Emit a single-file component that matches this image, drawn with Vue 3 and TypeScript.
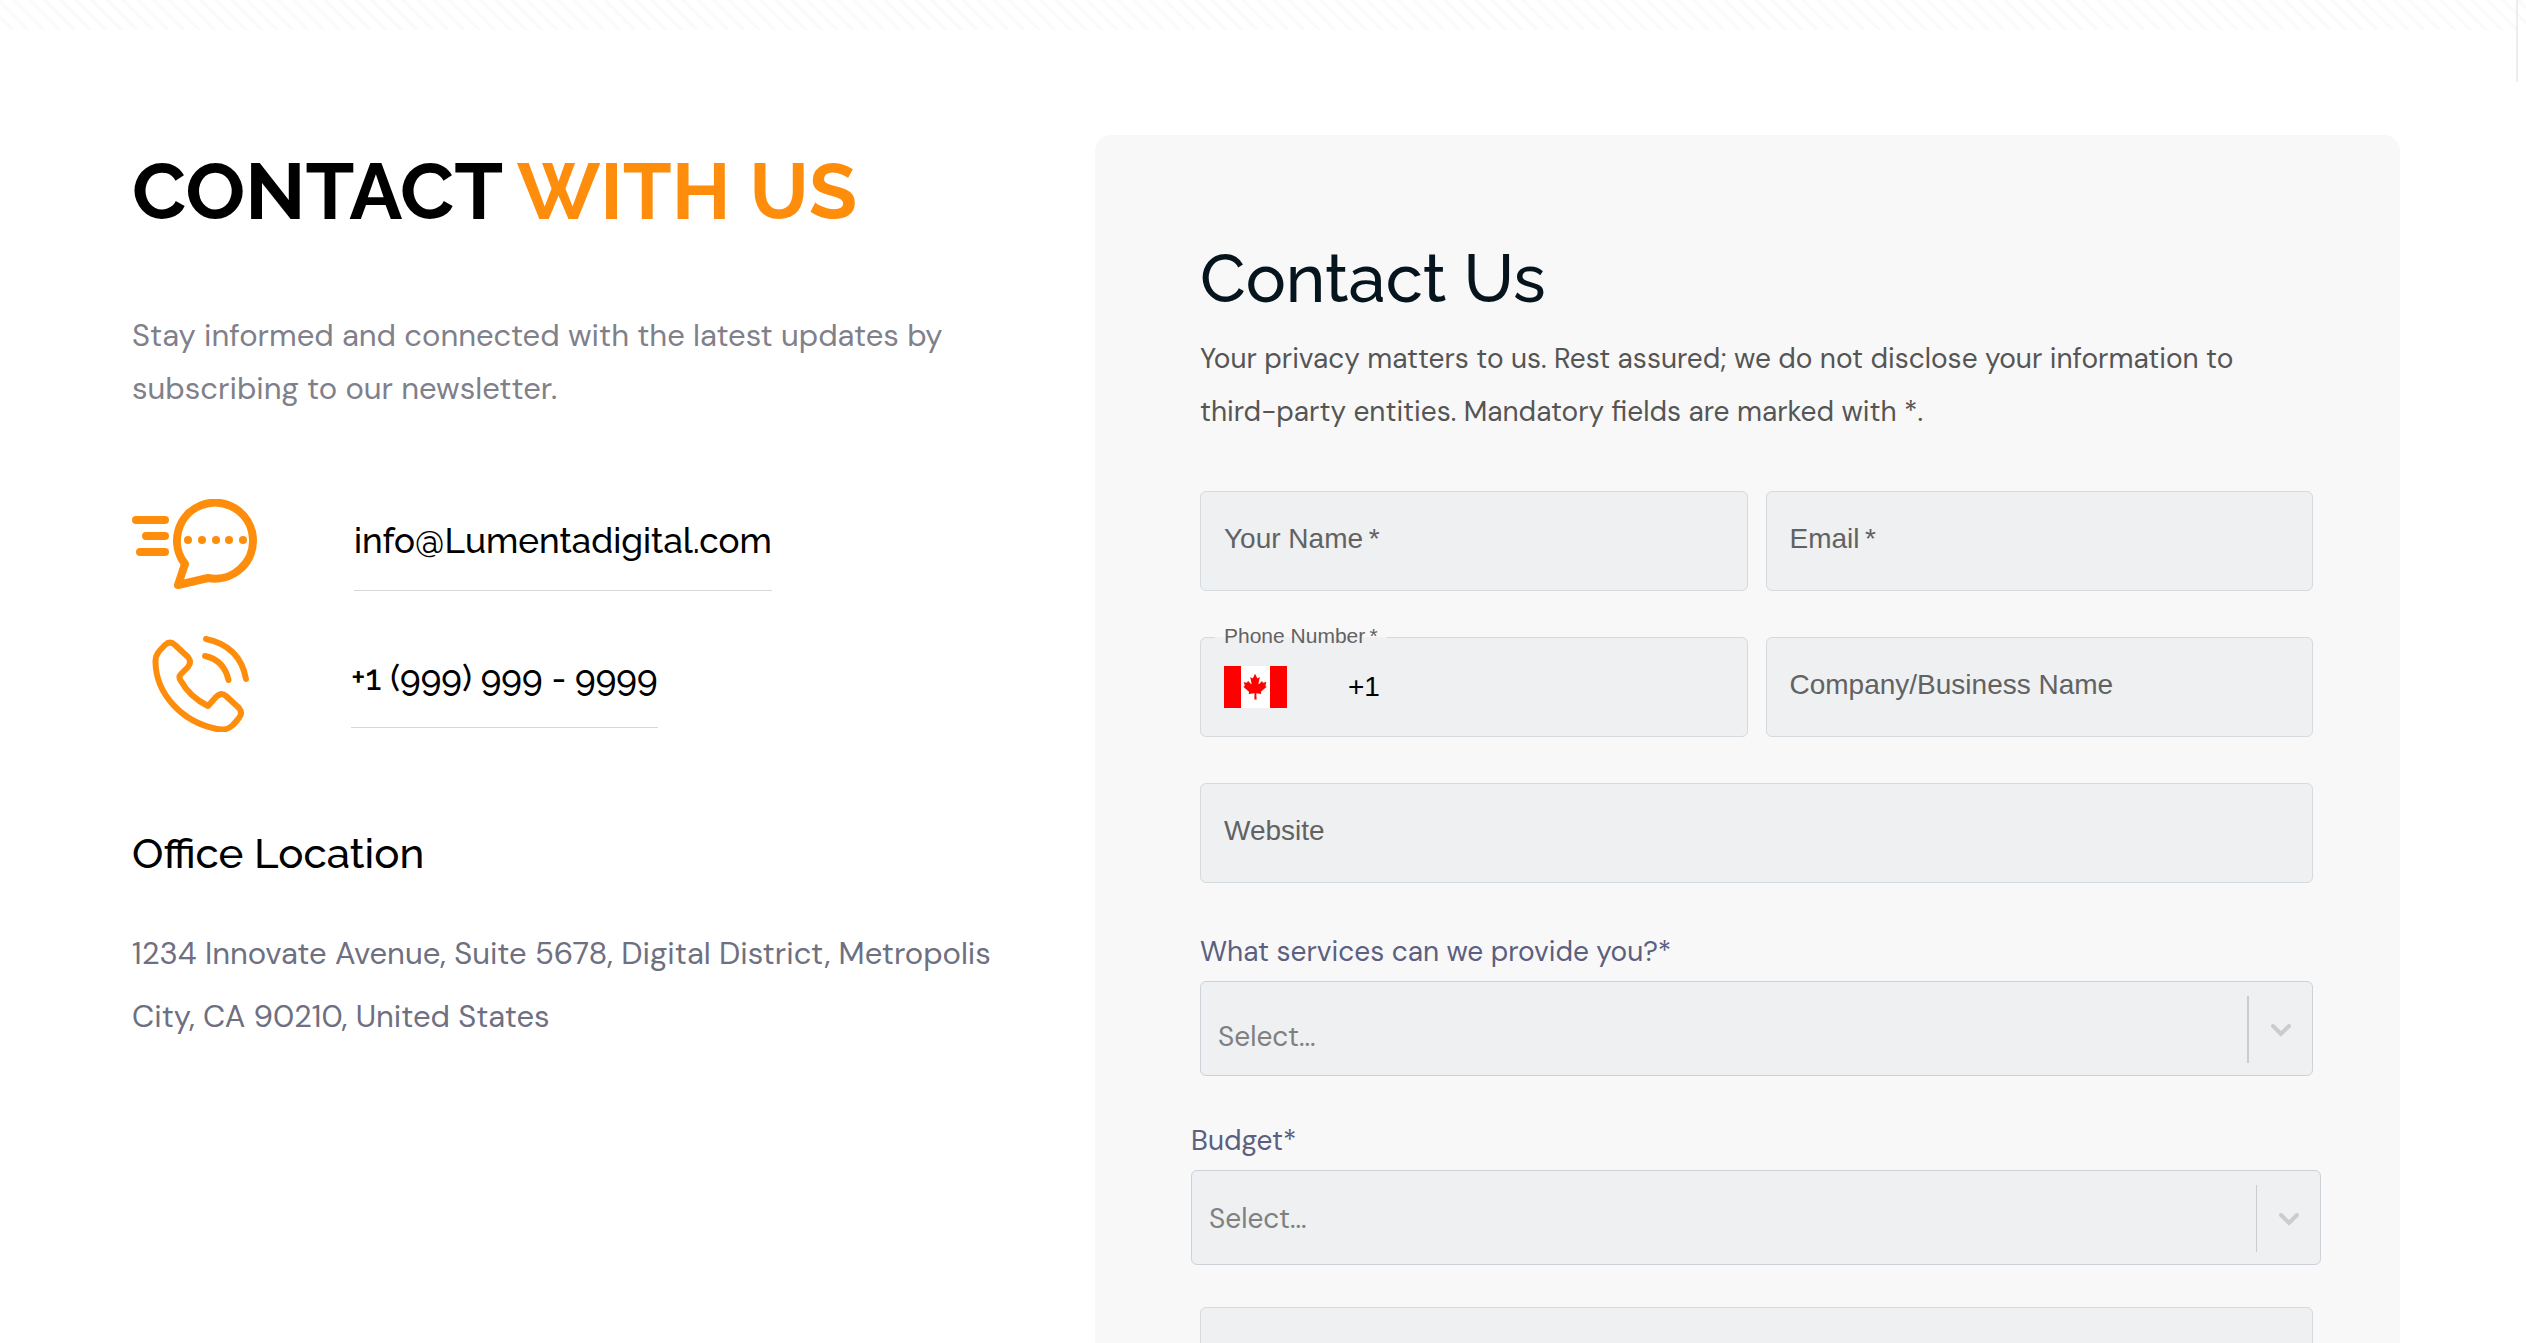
<script setup lang="ts">
import { ref } from 'vue'

const name = ref('')
const email = ref('')
const phone = ref('+1')
const company = ref('')
const website = ref('')
const service = ref('')
const budget = ref('')
const message = ref('')

const services: string[] = ['Web Development', 'Digital Marketing', 'Branding']
const budgets: string[] = ['Under $5,000', '$5,000 - $20,000', 'Over $20,000']
</script>

<template>
  <div class="page">
    <div class="stripes"></div>
    <div class="rail"></div>
    <main class="contact">
      <section class="info">
        <h1>CONTACT <span>WITH US</span></h1>
        <p class="lead">Stay informed and connected with the latest updates by subscribing to our newsletter.</p>
        <ul class="channels">
          <li>
            <svg width="126" height="92" viewBox="0 0 126 92" fill="none" stroke="#ff8d0c" stroke-width="8" stroke-linecap="round" stroke-linejoin="round" aria-hidden="true">
              <path d="M4 21H33M14 37H33M8 53H33" />
              <path d="M76 79A38 38 0 1 0 53 65L46 86Z" />
              <g fill="#ff8d0c" stroke="none">
                <circle cx="56" cy="41" r="4" /><circle cx="70" cy="41" r="4" /><circle cx="84" cy="41" r="4" /><circle cx="97" cy="41" r="4" /><circle cx="111" cy="41" r="4" />
              </g>
            </svg>
            <a href="mailto:info@Lumentadigital.com">info@Lumentadigital.com</a>
          </li>
          <li>
            <svg width="123" height="96" viewBox="0 0 123 96" fill="none" stroke="#ff8d0c" stroke-width="6" stroke-linecap="round" stroke-linejoin="round" aria-hidden="true">
              <path d="M23.500 26C23 19 27 15 33 9Q38 4 43 9L56 21Q60 26 56 31L49 38Q46 41 49 45C55 56 64 64 76 70L84 61Q89 56 94 60L107 72Q111 77 107 82L101 89Q95 95 85 93C50 86 24 58 23.500 26Z" />
              <path d="M73 20Q92 24 96.500 44M74 3Q108 10 114 43" />
            </svg>
            <a href="tel:+19999999999">+1 (999) 999 - 9999</a>
          </li>
        </ul>
        <h2>Office Location</h2>
        <address>1234 Innovate Avenue, Suite 5678, Digital District, Metropolis City, CA 90210, United States</address>
      </section>

      <form class="card" @submit.prevent>
        <h2>Contact Us</h2>
        <p>Your privacy matters to us. Rest assured; we do not disclose your information to third-party entities. Mandatory fields are marked with *.</p>
        <div class="fields">
          <div class="field">
            <input id="name" v-model="name" type="text" required />
            <label for="name">Your Name&#8201;*</label>
          </div>
          <div class="field">
            <input id="email" v-model="email" type="email" required />
            <label for="email">Email&#8201;*</label>
          </div>
          <div class="field phone">
            <input id="phone" v-model="phone" type="tel" required />
            <label for="phone">Phone Number&#8201;*</label>
            <svg class="flag" width="63" height="42" viewBox="0 0 63 42" aria-hidden="true">
              <path fill="#fff" d="M0 0H63V42H0z" />
              <path fill="#f00" d="M0 0H17V42H0zM46 0H63V42H46z" />
              <path fill="#f00" transform="translate(2 -1) scale(.092)" d="M201 232l-13.300 4.400 61.400 54c4.700 13.700-1.600 17.800-5.600 25l66.600-8.400-1.600 67h24l-3.100-66.600 56.700 8c-4.100-8.700-7.800-13.300-4-27.200l61.300-51-10.700-4c-8.800-6.800 3.800-32.600 5.600-48.900 0 0-35.700 12.300-38 5.800l-9.200-17.500-32.600 35.800c-3.500.9-5-.5-5.900-3.500l15-74.800-23.800 13.400c-2 .9-4 .1-5.200-2.200l-23-46-23.600 47.800c-1.800 1.700-3.600 1.900-5 .7L264 130.800l13.700 74.100c-1.100 3-3.700 3.800-6.700 2.200l-31.200-35.300c-4 6.500-6.800 17.100-12.200 19.500-5.400 2.300-23.500-4.500-35.600-7 4.200 14.800 17 39.600 9 47.700z" />
            </svg>
          </div>
          <div class="field">
            <input id="company" v-model="company" type="text" />
            <label for="company">Company/Business Name</label>
          </div>
          <div class="field wide">
            <input id="website" v-model="website" type="url" />
            <label for="website">Website</label>
          </div>
        </div>

        <div class="choice service">
          <label for="service">What services can we provide you?*</label>
          <div class="select">
            <select id="service" v-model="service" required>
              <option value="">Select...</option>
              <option v-for="s in services" :key="s">{{ s }}</option>
            </select>
            <span class="arrow"><svg width="20" height="13" viewBox="0 0 20 13" aria-hidden="true"><path d="M2 2L10 10L18 2" /></svg></span>
          </div>
        </div>
        <div class="choice budget">
          <label for="budget">Budget*</label>
          <div class="select">
            <select id="budget" v-model="budget" required>
              <option value="">Select...</option>
              <option v-for="b in budgets" :key="b">{{ b }}</option>
            </select>
            <span class="arrow"><svg width="20" height="13" viewBox="0 0 20 13" aria-hidden="true"><path d="M2 2L10 10L18 2" /></svg></span>
          </div>
        </div>
        <textarea v-model="message" aria-label="Message"></textarea>
      </form>
    </main>
  </div>
</template>

<style>
body {
  margin: 0;
  background: #fff;
}
</style>

<style scoped>
* {
  box-sizing: border-box;
}
.page {
  position: relative;
  height: 100vh;
  overflow: hidden;
  font-family: "DM Sans", Lato, sans-serif;
}
.stripes {
  height: 30px;
  background: repeating-linear-gradient(45deg, #fff 0 7px, #fafafa 8px 10px, #fff 11px);
}
.rail {
  position: absolute;
  top: 0;
  right: 8px;
  width: 2px;
  height: 82px;
  background: #f0ecec;
}
.contact {
  display: grid;
  grid-template-columns: minmax(0, 963fr) minmax(0, 1305fr);
  padding: 105px 126px 0 132px;
}
h1,
h2,
p,
ul {
  margin: 0;
  padding: 0;
  font-weight: 400;
}
.info {
  padding: 8px 80px 0 0;
}
h1,
h2,
.channels a {
  font-family: Raleway, Lato, sans-serif;
  font-weight: 500;
  color: #000;
}
h1 {
  font-size: 79px;
  line-height: 96px;
  font-weight: 700;
  white-space: nowrap;
}
h1 span {
  color: #ff8d0c;
}
.lead {
  margin-top: 70px;
  font-size: 31px;
  line-height: 53px;
  color: #7f808a;
}
.channels {
  display: grid;
  gap: 45px;
  margin-top: 84px;
  list-style: none;
}
.channels li {
  display: flex;
  align-items: flex-start;
  gap: 96px;
}
.channels svg {
  flex: none;
}
.channels a {
  margin-top: 17px;
  padding-bottom: 24px;
  border-bottom: 1px solid #d8d8d8;
  font-size: 35px;
  line-height: 50px;
  text-decoration: none;
}
.info h2 {
  margin-top: 97px;
  font-size: 42px;
  line-height: 50px;
}
address {
  margin-top: 43px;
  font-size: 31px;
  line-height: 63px;
  font-style: normal;
  color: #6e7081;
}
.card {
  padding: 104px 87px 80px 105px;
  border-radius: 16px;
  background: #f8f8f8;
}
.card h2 {
  font-size: 67px;
  line-height: 80px;
  color: #06141d;
}
.card p {
  margin-top: 13px;
  font-size: 28px;
  line-height: 53px;
  color: #555;
}
.fields {
  display: grid;
  grid-template-columns: 1fr 1fr;
  gap: 46px 18px;
  margin-top: 53px;
}
.field {
  position: relative;
  height: 100px;
}
.wide {
  grid-column: 1 / -1;
}
input,
select,
textarea {
  display: block;
  width: 100%;
  height: 100%;
  margin: 0;
  border: 1px solid #d4dadd;
  border-radius: 6px;
  outline: 0;
  background: #eef0f2;
  font: inherit;
  color: #000;
}
input {
  padding: 0 24px;
  font: 28px "Liberation Sans", Arial, sans-serif;
}
.field label {
  position: absolute;
  top: 32px;
  left: 24px;
  font: 28px/32px "Liberation Sans", Arial, sans-serif;
  color: #626262;
  pointer-events: none;
}
.phone input {
  padding-left: 147px;
}
.phone label {
  top: -14px;
  left: 15px;
  padding: 0 9px;
  background: linear-gradient(#eef0f2, #eef0f2) 0 14px / 100% 1px no-repeat;
  font-size: 21px;
  line-height: 26px;
}
.flag {
  position: absolute;
  top: 29px;
  left: 24px;
}
.choice label {
  display: block;
  margin-bottom: 12px;
  font-size: 28px;
  line-height: 34px;
  color: #5b6080;
}
.service {
  margin-top: 52px;
}
.budget {
  margin: 48px -8px 0 -9px;
}
.select {
  position: relative;
  height: 95px;
}
select {
  appearance: none;
  padding: 2px 80px 0 17px;
  border-color: #cdd2d9;
  font-size: 28px;
  color: #808080;
}
.service select {
  padding-top: 16px;
}
.arrow {
  position: absolute;
  top: 15px;
  right: 0;
  display: grid;
  place-items: center;
  width: 66px;
  height: 67px;
  padding-top: 2px;
  border-left: 2px solid #ccc;
  pointer-events: none;
}
.budget .arrow {
  width: 65px;
  border-left-width: 1px;
}
.arrow path {
  fill: none;
  stroke: #ccc;
  stroke-width: 4;
  stroke-linecap: round;
}
textarea {
  height: 200px;
  margin-top: 42px;
  resize: none;
}
</style>
